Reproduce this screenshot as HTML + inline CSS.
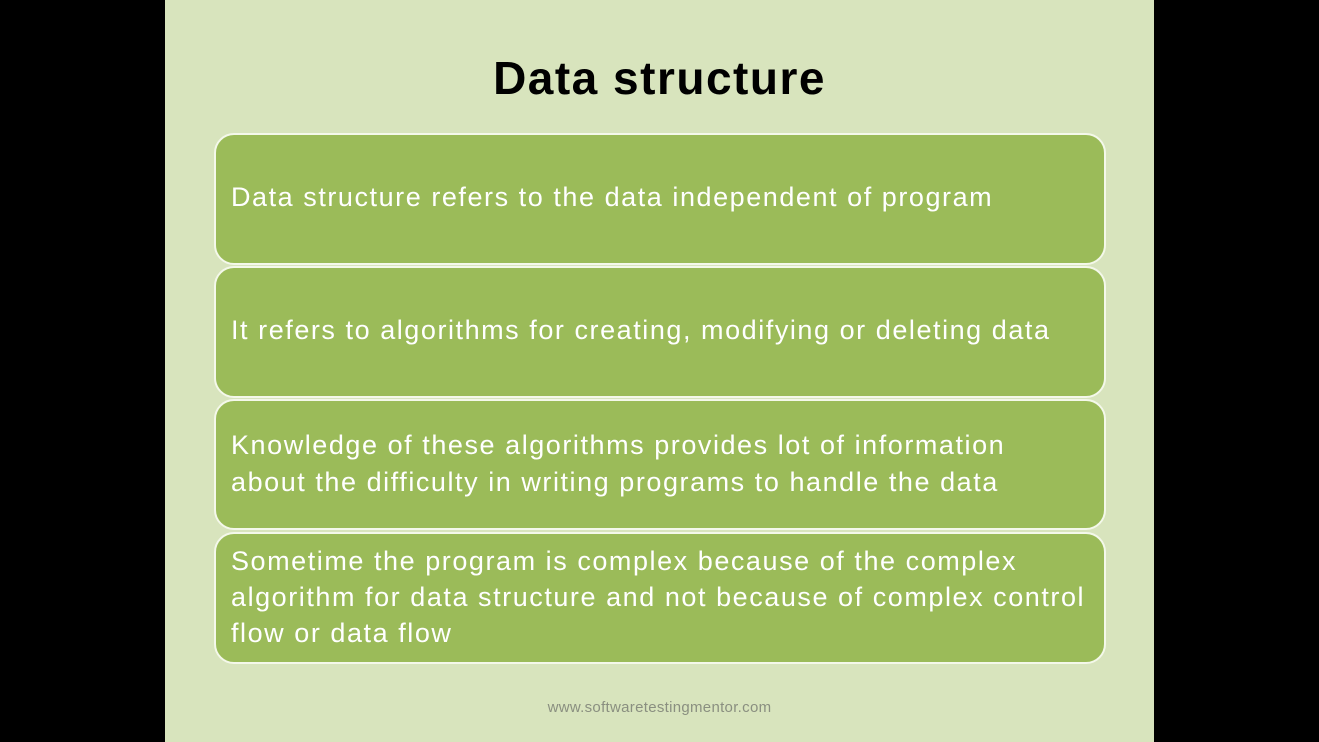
<!DOCTYPE html>
<html><head><style>
body{margin:0;background:#000;width:1319px;height:742px;overflow:hidden;font-family:"Liberation Sans",sans-serif}
.slide{position:absolute;left:165px;top:0;width:989px;height:742px;background:#d8e4bd}
h1{position:absolute;left:0;width:100%;top:52px;margin:0;text-align:center;font-size:46px;font-weight:bold;color:#000;line-height:52px;letter-spacing:1.5px}
.box{position:absolute;left:49px;width:892px;background:#9bbb59;border:2px solid #f4f8ea;border-radius:20px;box-sizing:border-box;color:#fff;font-size:27px;line-height:37px;padding-left:15px;display:flex;flex-direction:column;justify-content:center;white-space:nowrap;letter-spacing:1.55px}
.foot{position:absolute;left:0;width:100%;top:699px;text-align:center;font-size:15px;color:#8a8f80;letter-spacing:0.3px}
</style></head><body>
<div class="slide">
<h1>Data structure</h1>
<div class="box" style="top:133px;height:132px;padding-bottom:3px">Data structure refers to the data independent of program</div>
<div class="box" style="top:266px;height:132px;padding-bottom:3px">It refers to algorithms for creating, modifying or deleting data</div>
<div class="box" style="top:399px;height:131px;padding-bottom:2px">Knowledge of these algorithms provides lot of information<br>about the difficulty in writing programs to handle the data</div>
<div class="box" style="top:532px;height:132px;line-height:36px;padding-bottom:3px">Sometime the program is complex because of the complex<br>algorithm for data structure and not because of complex control<br>flow or data flow</div>
<div class="foot">www.softwaretestingmentor.com</div>
</div>
</body></html>
